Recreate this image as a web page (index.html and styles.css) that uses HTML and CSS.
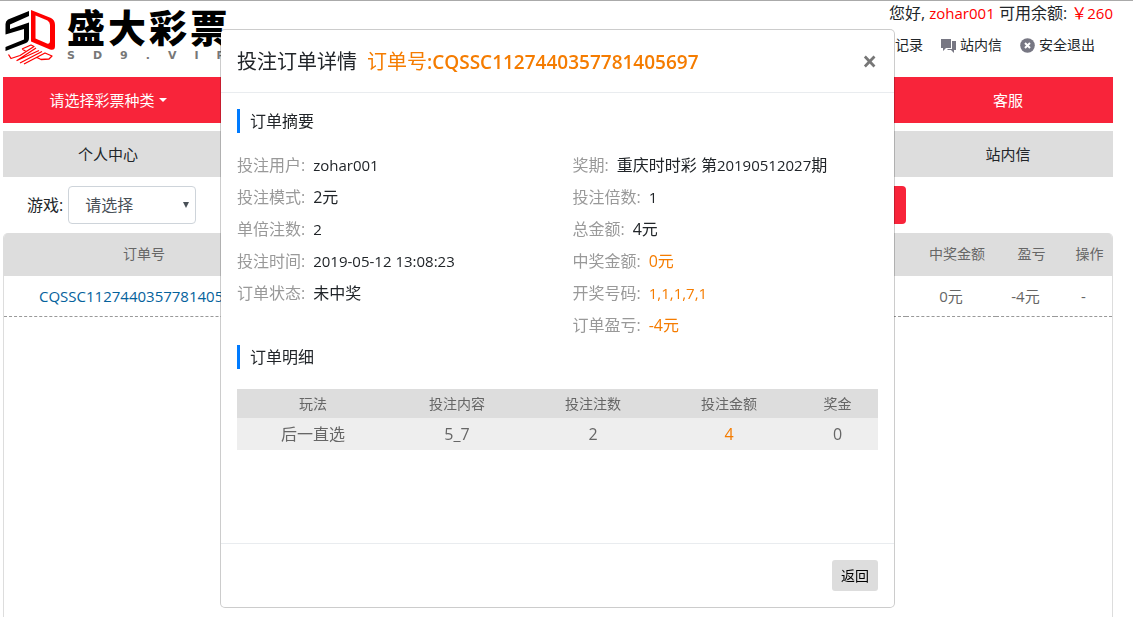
FILE: index.html
```
<!DOCTYPE html>
<html lang="zh-CN">
<head>
<meta charset="utf-8">
<title>投注订单详情</title>
<link rel="stylesheet" href="styles.css">
</head>
<body>
<div class="page">
  <header class="site-header">
    <a class="logo" href="#">
      <svg class="logo-mark" width="52" height="56" viewBox="4 9 52 56" aria-hidden="true">
        <path fill="#000" d="M29 11 8 19.500Q5.500 21 5.500 24V34.500L24 29V39.500L5.500 47V51L26 43Q29 41.500 29 38V22.500L10 29V24.500L29 16Z"/>
        <path fill="#f00" fill-rule="evenodd" d="M31 10 51 18Q55 20 55 25V46Q55 51 50 49.500L31 41.500ZM35.500 15.500V38.500L47 43.500Q50 44.500 50 41V25Q50 22 47.500 20.500Z"/>
        <g fill="none" stroke="#f00" stroke-width="1.300" stroke-linejoin="round">
          <path d="M22 49 31 45 34 46.500 20 55.500 11 58.500 8.500 54.500M22 49 26 51.500"/>
          <path d="M36 48 17 60.500 39 50.500"/>
          <path d="M42 51.500 20 63"/>
          <path d="M24 64 45 53 52 56 49 59 41 59.500 37 57.500"/>
        </g>
      </svg>
      <span class="logo-words">
        <span class="logo-name"><span>盛</span><span>大</span><span>彩</span><span>票</span></span>
        <span class="logo-domain"><span>S</span><span>D</span><span>9</span><span>.</span><span>V</span><span>I</span><span>P</span></span>
      </span>
    </a>
    <div class="account">
      <p class="greeting">您好, <span class="red"><span class="latin">zohar001</span></span> 可用余额: <span class="red">￥<span class="latin">260</span></span></p>
      <nav class="tools">
        <a href="#">记录</a>
        <a href="#"><svg width="15" height="15" viewBox="0 0 15 15" aria-hidden="true"><path fill="#777783" d="M0 1h10v9H5l-3 3v-3H0zM11 3h4v9h-2v3l-3-3H6l1-1h4z"/></svg>站内信</a>
        <a href="#"><svg width="15" height="15" viewBox="0 0 15 15" aria-hidden="true"><circle cx="7.500" cy="7.500" r="7.300" fill="#777783"/><path d="m5 5 5 5m0-5-5 5" stroke="#fff" stroke-width="2"/></svg>安全退出</a>
      </nav>
    </div>
  </header>

  <nav class="bar bar-main">
    <button type="button" class="bar-item">请选择彩票种类<span class="caret"></span></button>
    <a class="bar-item" href="#">客服</a>
  </nav>
  <nav class="bar bar-sub">
    <a class="bar-item" href="#">个人中心</a>
    <a class="bar-item" href="#">站内信</a>
  </nav>

  <form class="filters">
    <label for="game">游戏:</label>
    <span class="select-wrap"><select id="game"><option>请选择</option></select></span>
    <button type="submit" class="search"></button>
  </form>

  <main class="orders">
    <table class="orders-table">
      <colgroup><col class="c-id"><col><col class="c-win"><col class="c-profit"><col class="c-act"></colgroup>
      <thead><tr><th>订单号</th><th></th><th>中奖金额</th><th>盈亏</th><th>操作</th></tr></thead>
      <tbody><tr><td><a class="latin" href="#">CQSSC1127440357781405697</a></td><td></td><td>0元</td><td>-4元</td><td>-</td></tr></tbody>
    </table>
  </main>
</div>

<div class="overlay">
  <section class="modal" role="dialog" aria-labelledby="modal-title">
    <header class="modal-header">
      <h1 id="modal-title">投注订单详情<span class="order-no">订单号<strong>:CQSSC1127440357781405697</strong></span></h1>
      <button type="button" class="close">×</button>
    </header>
    <div class="modal-body">
      <h2>订单摘要</h2>
      <div class="summary">
        <dl>
          <div><dt>投注用户:</dt><dd class="latin">zohar001</dd></div>
          <div><dt>投注模式:</dt><dd>2元</dd></div>
          <div><dt>单倍注数:</dt><dd class="latin">2</dd></div>
          <div><dt>投注时间:</dt><dd class="latin">2019-05-12 13:08:23</dd></div>
          <div><dt>订单状态:</dt><dd>未中奖</dd></div>
        </dl>
        <dl>
          <div><dt>奖期:</dt><dd>重庆时时彩 第<span class="latin">20190512027</span>期</dd></div>
          <div><dt>投注倍数:</dt><dd class="latin">1</dd></div>
          <div><dt>总金额:</dt><dd>4元</dd></div>
          <div><dt>中奖金额:</dt><dd class="orange">0元</dd></div>
          <div><dt>开奖号码:</dt><dd class="orange latin">1,1,1,7,1</dd></div>
          <div><dt>订单盈亏:</dt><dd class="orange">-4元</dd></div>
        </dl>
      </div>
      <h2>订单明细</h2>
      <table class="detail">
        <colgroup><col class="d-play"><col class="d-mid"><col class="d-mid"><col class="d-mid"><col></colgroup>
        <thead><tr><th>玩法</th><th>投注内容</th><th>投注注数</th><th>投注金额</th><th>奖金</th></tr></thead>
        <tbody><tr><td>后一直选</td><td>5_7</td><td>2</td><td class="orange">4</td><td>0</td></tr></tbody>
      </table>
    </div>
    <footer class="modal-footer"><button type="button" class="back">返回</button></footer>
  </section>
</div>
</body>
</html>
```

FILE: styles.css
```
* { box-sizing: border-box; }

body {
  margin: 0;
  overflow: hidden;
  background: #fff;
  color: #212529;
  font: 16px/24px "Open Sans", "Noto Sans CJK SC", sans-serif;
}

h1, h2, p, dl, dd { margin: 0; font-weight: 400; }
a { color: inherit; text-decoration: none; }
button { border: 0; font: inherit; }
svg { display: block; }
.latin { font-size: 15px; }
.red { color: #f00; }
.orange { color: #f57c00; }

.page {
  display: flex;
  flex-direction: column;
  min-height: 100vh;
  padding: 0 20px 0 3px;
  border-top: 1px solid #aaa;
}

.site-header {
  display: flex;
  justify-content: space-between;
  height: 76px;
}

.logo { display: flex; gap: 11px; padding: 8px 0 0 1px; }
.logo-words { display: flex; flex-direction: column; gap: 6px; }
.logo-name {
  display: grid;
  grid-template-columns: repeat(4, 41px);
  color: #000;
  font: 900 38px/34px "Noto Sans CJK SC", sans-serif;
}
.logo-domain {
  display: flex;
  gap: 18px;
  color: #777;
  font: bold 11px/14px "DejaVu Sans", sans-serif;
}

.greeting { text-align: right; }
.tools {
  display: flex;
  justify-content: flex-end;
  gap: 18px;
  padding: 10px 18px 0 0;
  font-size: 14px;
  line-height: 20px;
}
.tools a { display: flex; align-items: center; gap: 4px; }

.bar {
  display: flex;
  justify-content: space-between;
  margin-bottom: 8px;
  font-size: 15px;
}
.bar-main { background: #f8243a; color: #fff; }
.bar-sub { background: #ddd; }
.bar-item {
  width: 210px;
  padding: 11px 0;
  background: none;
  color: inherit;
  text-align: center;
}
.caret {
  display: inline-block;
  margin-left: 4px;
  border: 4px solid transparent;
  border-top-color: currentColor;
  border-bottom: 0;
  vertical-align: 4px;
}

.filters {
  display: flex;
  align-items: center;
  gap: 5px;
  padding: 1px 207px 9px 24px;
}
.select-wrap { display: grid; align-items: center; width: 128px; }
.select-wrap > select, .select-wrap::after { grid-area: 1 / 1; }
.select-wrap::after {
  content: "";
  justify-self: end;
  margin-right: 7px;
  border: 3px solid transparent;
  border-top: 6px solid #495057;
  border-bottom: 0;
  pointer-events: none;
}
.select-wrap > select {
  width: 100%;
  height: 38px;
  padding: 0 16px;
  appearance: none;
  border: 1px solid #ced4da;
  border-radius: 4px;
  background: #fff;
  color: #495057;
  font: inherit;
}
.search {
  width: 64px;
  height: 38px;
  margin-left: auto;
  border-radius: 4px;
  background: #f8243a;
}

.orders {
  flex: 1;
  border: 1px solid #ddd;
  border-width: 0 1px;
  border-radius: 5px 5px 0 0;
  overflow: hidden;
}
.orders-table, .detail {
  width: 100%;
  table-layout: fixed;
  border-collapse: collapse;
  color: #666;
  text-align: center;
}
.orders-table th, .orders-table td, .detail th, .detail td { padding: 0; }
.orders-table th {
  height: 43px;
  padding-bottom: 2px;
  background: #ddd;
  font-size: 14px;
  font-weight: 400;
}
.orders-table th:nth-child(n+3) { padding-left: 12px; }
.orders-table td { height: 40px; border-bottom: 1px dashed #999; font-size: 15px; }
.orders-table a { color: #05629c; }
.c-id { width: 280px; }
.c-win { width: 90px; }
.c-profit { width: 59px; }
.c-act { width: 57px; }

.overlay {
  position: fixed;
  inset: 0;
  display: flex;
  justify-content: center;
  align-items: flex-start;
  padding: 29px 20px 0 2px;
}
.modal {
  width: 675px;
  border: 1px solid rgba(0, 0, 0, .2);
  border-radius: 5px;
  background: #fff;
  background-clip: padding-box;
}
.modal-header {
  display: flex;
  justify-content: space-between;
  align-items: center;
  padding: 17px 16px 15px;
  border-bottom: 1px solid #e9ecef;
}
.modal-header h1 { font-size: 20px; line-height: 30px; }
.order-no { margin-left: 10px; color: #f57c00; }
.order-no strong { font-size: 19px; font-weight: 600; }
.close {
  padding: 0 1px 2px;
  background: none;
  color: #777;
  font: bold 26px/26px "Open Sans", sans-serif;
}

.modal-body { min-height: 450px; padding: 16px; }
.modal-body h2 {
  padding-left: 10px;
  border-left: 3px solid #007bff;
  font-size: 16px;
  line-height: 24px;
}
.summary {
  display: grid;
  grid-template-columns: 1fr 1fr;
  gap: 30px;
  padding: 16px 0 4px;
}
.summary dl > div { display: flex; gap: 8px; line-height: 32px; }
.summary dt { color: #999; }

.detail { margin-top: 20px; }
.detail th { height: 29px; background: #ddd; font-size: 14px; font-weight: 400; }
.detail td { height: 32px; background: #eee; }
.detail .orange { color: #f57c00; }
.d-play { width: 152px; }
.d-mid { width: 136px; }

.modal-footer {
  display: flex;
  justify-content: flex-end;
  padding: 16px;
  border-top: 1px solid #e9ecef;
}
.back {
  padding: 5px 9px;
  border-radius: 3px;
  background: #ddd;
  color: #000;
  font-size: 14px;
  line-height: 21px;
}
```
